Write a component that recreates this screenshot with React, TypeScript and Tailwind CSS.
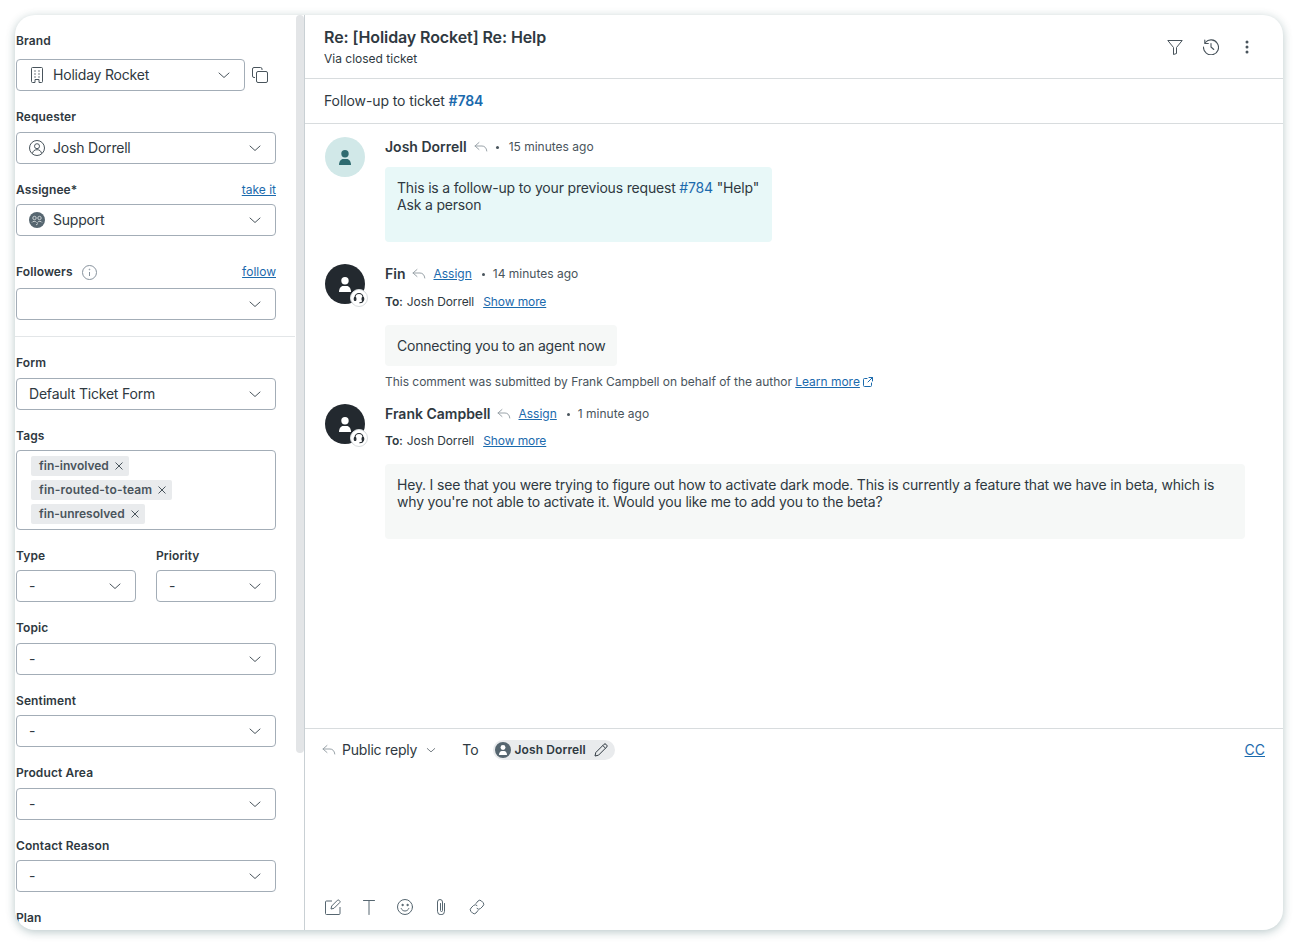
import React from "react";

const Chevron = ({ className = "" }: { className?: string }) => (
  <svg width="12" height="12" viewBox="0 0 12 12" fill="none" stroke="#49545c" strokeWidth="1" strokeLinecap="round" strokeLinejoin="round" className={className}>
    <path d="M1 4l5 4.500L11 4" />
  </svg>
);

const ReplyArrow = ({ className = "" }: { className?: string }) => (
  <svg width="14" height="12" viewBox="0 0 14 12" fill="none" stroke="#9aa3a9" strokeWidth="1" strokeLinecap="round" strokeLinejoin="round" className={className}>
    <path d="M5 1.500L1 5l4 3.500M1 5h7c2.500 0 4.500 1.800 4.800 5" />
  </svg>
);

const Sel = ({ children, icon, w = "w-[260px]" }: { children?: React.ReactNode; icon?: React.ReactNode; w?: string }) => (
  <div className={`${w} h-8 border border-[#a3adb7] rounded-[4px] flex items-center pl-3 pr-[14px] text-[14px] tracking-[-0.2px] text-[#2f3941] bg-white`}>
    {icon && <span className="w-6 flex items-center shrink-0">{icon}</span>}
    <span className="flex-1 pb-px">{children}</span>
    <Chevron />
  </div>
);

const Label = ({ children, right, className = "" }: { children: React.ReactNode; right?: React.ReactNode; className?: string }) => (
  <div className={`w-[260px] h-4 flex items-center justify-between text-[12px] leading-4 font-semibold tracking-[0.1px] text-[#2f3941] ${className}`}>
    <span className="flex items-center">{children}</span>
    {right && <a className="font-normal tracking-normal text-[#1b6aad] underline">{right}</a>}
  </div>
);

const Tag = ({ children, className = "" }: { children: React.ReactNode; className?: string }) => (
  <div className={`h-5 w-fit bg-[#e9ebed] rounded-[2px] pl-2 pr-[6px] flex items-center gap-[6px] text-[12px] font-semibold text-[#49545c] ${className}`}>
    {children}
    <svg width="8" height="8" viewBox="0 0 8 8" stroke="#49545c" strokeWidth="1" strokeLinecap="round"><path d="M.8.8l6.400 6.400M7.200.8L.8 7.200" /></svg>
  </div>
);

const PersonAvatar = ({ bg = "bg-[#23292f]", fg = "#ffffff", badge = true }: { bg?: string; fg?: string; badge?: boolean }) => (
  <div className={`relative w-10 h-10 rounded-full shrink-0 flex items-center justify-center ${bg}`}>
    <svg width="12" height="15" viewBox="0 0 12 15" fill={fg}>
      <circle cx="6" cy="3.700" r="3.700" />
      <path d="M0 15c0-3.400 1.800-6 4.300-6h3.400c2.500 0 4.300 2.600 4.300 6z" />
    </svg>
    {badge && (
      <div className="absolute left-[25px] top-[25px] w-[18px] h-[18px] rounded-full bg-white border border-[#d8dcde] flex items-center justify-center">
        <svg width="12" height="12" viewBox="0 0 12 12" fill="none" stroke="#23292f" strokeWidth="1.100" strokeLinecap="round">
          <path d="M2 7V5.500a4 4 0 0 1 8 0V7" />
          <rect x="1.300" y="5.500" width="1.600" height="3" rx=".8" fill="#23292f" />
          <rect x="9.100" y="5.500" width="1.600" height="3" rx=".8" fill="#23292f" />
          <path d="M10 8.500c0 1.500-1.500 2.200-3.200 2.200" />
        </svg>
      </div>
    )}
  </div>
);

const Dot = ({ className = "" }: { className?: string }) => <span className={`block w-[3px] h-[3px] rounded-full bg-[#49545c] shrink-0 ${className}`} />;

const Assign = () => <a className="ml-[7px] text-[12px] text-[#1b6aad] underline">Assign</a>;

const Name = ({ children }: { children: React.ReactNode }) => <span className="pb-px text-[14px] font-semibold text-[#2f3941]">{children}</span>;

const ToLine = ({ className = "mt-[10px]" }: { className?: string }) => (
  <div className={`${className} h-4 flex items-center text-[12px] tracking-[-0.1px] text-[#2f3941]`}>
    <span className="font-semibold">To:</span>
    <span className="ml-1">Josh Dorrell</span>
    <a className="ml-[9px] text-[#1b6aad] underline">Show more</a>
  </div>
);

export default function App() {
  return (
    <div className="w-[1298px] h-[946px] bg-white p-[15px] pb-4 overflow-hidden" style={{ fontFamily: "Inter, 'Liberation Sans', sans-serif" }}>
      <div className="w-[1268px] h-[915px] rounded-[20px] bg-white shadow-[0_2px_10px_rgba(23,73,77,0.3)] flex overflow-hidden">
        {/* Sidebar */}
        <aside className="relative w-[290px] shrink-0 border-r border-[#c9d0d4] overflow-hidden pl-px">
          <div className="absolute right-0 top-0 w-2 h-[738px] rounded-[4px] bg-[#e3e5e7]" />

          <Label className="mt-[18px]">Brand</Label>
          <div className="mt-[10px] flex items-center">
            <Sel
              w="w-[229px]"
              icon={
                <svg className="ml-[2px]" width="12" height="16" viewBox="0 0 12 16" fill="none" stroke="#49545c" strokeWidth="1" strokeLinejoin="round">
                  <path d="M.5 1.500a1 1 0 0 1 1-1h9a1 1 0 0 1 1 1v13a1 1 0 0 1-1 1H8v-3H4v3H1.500a1 1 0 0 1-1-1z" />
                  <path d="M3.500 4h1M7.500 4h1M3.500 7h1M7.500 7h1M3.500 10h1M7.500 10h1" strokeWidth="1.300" />
                </svg>
              }
            >
              Holiday Rocket
            </Sel>
            <svg className="ml-[7px]" width="16" height="16" viewBox="0 0 16 16" fill="none" stroke="#49545c" strokeWidth="1">
              <path d="M3 10.500H2A1.500 1.500 0 0 1 .5 9V2A1.500 1.500 0 0 1 2 .5h6.500A1.500 1.500 0 0 1 10 2v1" />
              <rect x="4.500" y="4.500" width="11" height="11" rx="1.500" />
            </svg>
          </div>

          <Label className="mt-[18px]">Requester</Label>
          <div className="mt-[7px]">
            <Sel
              icon={
                <svg width="16" height="16" viewBox="0 0 16 16" fill="none" stroke="#49545c" strokeWidth="1">
                  <circle cx="8" cy="8" r="7.500" />
                  <circle cx="8" cy="6.200" r="2.500" />
                  <path d="M3.500 13.500c.3-2.500 2-3.800 4.500-3.800s4.200 1.300 4.500 3.800" />
                </svg>
              }
            >
              Josh Dorrell
            </Sel>
          </div>

          <Label className="mt-[18px]" right="take it">Assignee*</Label>
          <div className="mt-[6px]">
            <Sel
              icon={
                <svg width="16" height="16" viewBox="0 0 16 16" fill="none">
                  <circle cx="8" cy="8" r="8" fill="#566670" />
                  <circle cx="5.500" cy="6" r="1.700" stroke="#d5dadd" strokeWidth=".9" />
                  <circle cx="10.500" cy="6" r="1.700" stroke="#d5dadd" strokeWidth=".9" />
                  <path d="M3 10.500c.5-1.500 4-1.500 4.500 0M8.500 10.500c.5-1.500 4-1.500 4.500 0M7 13l2-1.500" stroke="#d5dadd" strokeWidth=".9" />
                </svg>
              }
            >
              Support
            </Sel>
          </div>

          <Label className="mt-[28px]" right="follow">
            Followers
            <svg className="ml-[9px]" width="15" height="15" viewBox="0 0 15 15" fill="none" stroke="#87929d" strokeWidth="1">
              <circle cx="7.500" cy="7.500" r="7" />
              <path d="M7.500 7v4" />
              <circle cx="7.500" cy="4.500" r=".4" />
            </svg>
          </Label>
          <div className="mt-2">
            <Sel />
          </div>

          <div className="mt-4 h-px w-[280px] -ml-px bg-[#e3e6e8]" />

          <Label className="mt-[18px]">Form</Label>
          <div className="mt-[7px]">
            <Sel>Default Ticket Form</Sel>
          </div>

          <Label className="mt-[18px]">Tags</Label>
          <div className="mt-[6px] w-[260px] h-20 border border-[#a3adb7] rounded-[4px] pl-[14px] pt-[5px] flex flex-col gap-1">
            <Tag>fin-involved</Tag>
            <Tag className="tracking-[0.17px]">fin-routed-to-team</Tag>
            <Tag>fin-unresolved</Tag>
          </div>

          <div className="mt-[18px] flex gap-5">
            <div>
              <Label className="!w-[120px]">Type</Label>
              <div className="mt-[6px]">
                <Sel w="w-[120px]">-</Sel>
              </div>
            </div>
            <div>
              <Label className="!w-[120px]">Priority</Label>
              <div className="mt-[6px]">
                <Sel w="w-[120px]">-</Sel>
              </div>
            </div>
          </div>

          <Label className="mt-[18px]">Topic</Label>
          <div className="mt-[7px]"><Sel>-</Sel></div>

          <Label className="mt-[18px]">Sentiment</Label>
          <div className="mt-[6px]"><Sel>-</Sel></div>

          <Label className="mt-[18px]">Product Area</Label>
          <div className="mt-[7px]"><Sel>-</Sel></div>

          <Label className="mt-[18px]">Contact Reason</Label>
          <div className="mt-[6px]"><Sel>-</Sel></div>

          <Label className="mt-[18px]">Plan</Label>
        </aside>

        {/* Main */}
        <main className="flex-1 flex flex-col min-w-0">
          <header className="h-[64px] shrink-0 border-b border-[#d8dcde] flex items-start justify-between pl-[19px] pr-[34px]">
            <div>
              <h1 className="mt-[12px] text-[16px] leading-5 font-semibold tracking-[-0.1px] text-[#2f3941]">Re: [Holiday Rocket] Re: Help</h1>
              <div className="mt-1 text-[12px] leading-4 text-[#2f3941]">Via closed ticket</div>
            </div>
            <div className="mt-[24px] flex items-center">
              <svg width="16" height="16" viewBox="0 0 16 16" fill="none" stroke="#49545c" strokeWidth="1" strokeLinejoin="round">
                <path d="M.8 1.500h14.400L9.500 8.500v6L6.500 15.500v-7z" />
              </svg>
              <svg className="ml-5" width="16" height="16" viewBox="0 0 16 16" fill="none" stroke="#49545c" strokeWidth="1.100" strokeLinecap="round" strokeLinejoin="round">
                <path d="M2.300 3.500A7.500 7.500 0 1 1 .5 8" />
                <path d="M1.800 1v3.500h3.500" />
                <path d="M8 4.500V8l2.800 2.500" />
              </svg>
              <svg className="ml-[26px]" width="4" height="14" viewBox="0 0 4 14" fill="#49545c">
                <circle cx="2" cy="2" r="1.500" />
                <circle cx="2" cy="7" r="1.500" />
                <circle cx="2" cy="12" r="1.500" />
              </svg>
            </div>
          </header>

          <div className="h-[45px] shrink-0 border-b border-[#d8dcde] pl-[19px] pb-px flex items-center text-[14px] tracking-[-0.1px] text-[#2f3941]">
            Follow-up to ticket&nbsp;<a className="font-semibold text-[#1b6aad]">#784</a>
          </div>

          <div className="flex-1 min-h-0 pl-5 pr-[38px]">
            {/* Message 1 */}
            <div className="mt-[13px] flex gap-5">
              <PersonAvatar bg="bg-[#d1e8e8]" fg="#2f6b70" badge={false} />
              <div>
                <div className="h-5 flex items-center text-[12px] text-[#49545c]">
                  <Name>Josh Dorrell</Name>
                  <ReplyArrow className="ml-[7px]" />
                  <Dot className="ml-2 mr-[10px]" />
                  15 minutes ago
                </div>
                <div className="mt-[10px] w-[387px] h-[75px] rounded-[4px] bg-[#e8f8f8] px-3 pt-3 text-[14px] leading-[17px] tracking-[-0.18px] text-[#2f3941]">
                  This is a follow-up to your previous request <a className="text-[#1b6aad]">#784</a> "Help"
                  <br />
                  Ask a person
                </div>
              </div>
            </div>

            {/* Message 2 */}
            <div className="mt-[22px] flex gap-5">
              <PersonAvatar />
              <div>
                <div className="h-5 flex items-center text-[12px] text-[#49545c]">
                  <Name>Fin</Name>
                  <ReplyArrow className="ml-[7px]" />
                  <Assign />
                  <Dot className="ml-[10px] mr-2" />
                  14 minutes ago
                </div>
                <ToLine />
                <div className="mt-[15px] w-fit h-[41px] rounded-[4px] bg-[#f6f8f7] px-3 pb-px flex items-center text-[14px] tracking-[-0.2px] text-[#2f3941]">
                  Connecting you to an agent now
                </div>
                <div className="mt-[8px] h-4 flex items-center text-[12px] tracking-[-0.02px] text-[#49545c]">
                  This comment was submitted by Frank Campbell on behalf of the author&nbsp;
                  <a className="text-[#1b6aad] underline">Learn more</a>
                  <svg className="ml-[3px]" width="10" height="10" viewBox="0 0 10 10" fill="none" stroke="#1b6aad" strokeWidth="1" strokeLinecap="round">
                    <path d="M4 1.500H1.500a1 1 0 0 0-1 1v6a1 1 0 0 0 1 1h6a1 1 0 0 0 1-1V6M6 .5h3.500V4M9.500.5L5 5" />
                  </svg>
                </div>
              </div>
            </div>

            {/* Message 3 */}
            <div className="mt-[14px] flex gap-5">
              <PersonAvatar />
              <div className="flex-1">
                <div className="h-5 flex items-center text-[12px] text-[#49545c]">
                  <Name>Frank Campbell</Name>
                  <ReplyArrow className="ml-[7px]" />
                  <Assign />
                  <Dot className="ml-[10px] mr-2" />
                  1 minute ago
                </div>
                <ToLine className="mt-[9px]" />
                <div className="mt-[15px] h-[75px] rounded-[4px] bg-[#f6f8f7] px-3 pt-3 text-[14px] leading-[17px] tracking-[-0.18px] text-[#2f3941]">
                  Hey. I see that you were trying to figure out how to activate dark mode. This is currently a feature that we have in beta, which is why you're not able to activate it. Would you like me to add you to the beta?
                </div>
              </div>
            </div>
          </div>

          {/* Composer */}
          <div className="h-[202px] shrink-0 border-t border-[#d8dcde] flex flex-col">
            <div className="h-[42px] flex items-center pl-[17px] pr-[18px] text-[14px] text-[#2f3941]">
              <ReplyArrow />
              <span className="ml-[6px] pb-px tracking-[-0.2px]">Public reply</span>
              <Chevron className="ml-2 scale-[.75]" />
              <span className="ml-[25px] pb-px">To</span>
              <div className="ml-[14px] h-5 rounded-full bg-[#e9ebed] flex items-center pl-[2px] pr-[7px] text-[12px] font-semibold">
                <span className="w-4 h-4 rounded-full bg-[#566670] flex items-center justify-center">
                  <svg width="8" height="10" viewBox="0 0 12 15" fill="#fff"><circle cx="6" cy="3.700" r="3.700" /><path d="M0 15c0-3.400 1.800-6 4.300-6h3.400c2.500 0 4.300 2.600 4.300 6z" /></svg>
                </span>
                <span className="ml-1 tracking-[0.1px]">Josh Dorrell</span>
                <svg className="ml-2" width="14" height="14" viewBox="0 0 14 14" fill="none" stroke="#2f3941" strokeWidth="1" strokeLinejoin="round">
                  <path d="M1 13l.8-3.500L10 1.300a1.400 1.400 0 0 1 2 0l.7.7a1.400 1.400 0 0 1 0 2L4.500 12.200z" />
                  <path d="M8.800 2.500l2.700 2.700" />
                </svg>
              </div>
              <a className="ml-auto pb-px text-[#1b6aad] underline">CC</a>
            </div>
            <div className="flex-1" />
            <div className="h-[48px] pl-5 pt-[17px] flex items-start">
              <div className="flex items-center gap-[20px]">
                <svg width="16" height="16" viewBox="0 0 16 16" fill="none" stroke="#566670" strokeWidth="1" strokeLinejoin="round">
                  <path d="M7 2H1.500a1 1 0 0 0-1 1v11.500a1 1 0 0 0 1 1H14a1 1 0 0 0 1-1V8" />
                  <path d="M6 10l.7-3L12.500 1.200a1 1 0 0 1 1.400 0l.9.9a1 1 0 0 1 0 1.400L9 9.300z" />
                </svg>
                <svg width="16" height="16" viewBox="0 0 16 16" fill="none" stroke="#566670" strokeWidth="1" strokeLinecap="round">
                  <path d="M2.500 1.500h11M8 1.500v14" />
                </svg>
                <svg width="16" height="16" viewBox="0 0 16 16" fill="none" stroke="#566670" strokeWidth="1" strokeLinecap="round">
                  <circle cx="8" cy="8" r="7.500" />
                  <path d="M4.200 9.500c.8 1.700 2.100 2.500 3.800 2.500s3-.8 3.800-2.500" />
                  <circle cx="5.500" cy="6" r=".7" fill="#566670" />
                  <circle cx="10.500" cy="6" r=".7" fill="#566670" />
                </svg>
                <svg width="16" height="16" viewBox="0 0 16 16" fill="none" stroke="#566670" strokeWidth="1" strokeLinecap="round">
                  <path d="M11.500 4.500v7.800a3.500 3.500 0 0 1-7 0V3a2.500 2.500 0 0 1 5 0v8.500a1 1 0 0 1-2 0V4.500" />
                </svg>
                <svg width="16" height="16" viewBox="0 0 16 16" fill="none" stroke="#566670" strokeWidth="1" strokeLinecap="round">
                  <path d="M7 4.500l2-2.500a2.500 2.500 0 0 1 3.500 0l1.500 1.500a2.500 2.500 0 0 1 0 3.500L11.500 9.500a2.500 2.500 0 0 1-3.500 0" />
                  <path d="M9 11.500l-2 2.500a2.500 2.500 0 0 1-3.500 0L2 12.500a2.500 2.500 0 0 1 0-3.500L4.500 6.500a2.500 2.500 0 0 1 3.500 0" />
                </svg>
              </div>
            </div>
          </div>
        </main>
      </div>
    </div>
  );
}
